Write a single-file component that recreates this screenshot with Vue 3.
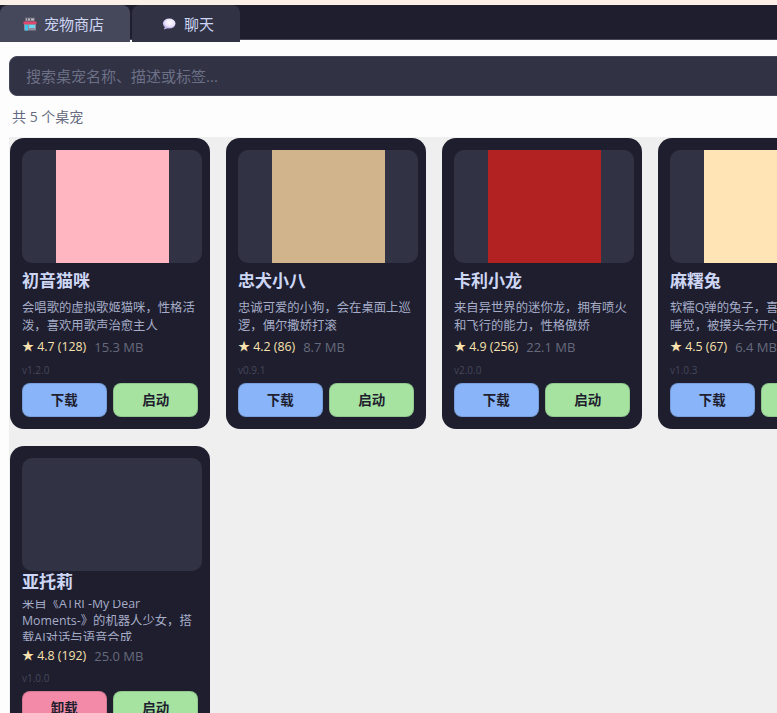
<template>
  <div class="app">
    <div class="strip"></div>
    <nav class="tabs">
      <button v-for="tab in tabs" :key="tab.id" class="tab" :class="{ active: tab.id === activeTab }">
        <svg v-if="tab.id === 'shop'" class="tab-icon" viewBox="0 0 14 14">
          <rect x="2" y="0.5" width="10" height="4" fill="#6f6b78" />
          <rect x="3" y="1.5" width="8" height="2" fill="#b9b6bf" />
          <rect x="4" y="1.5" width="1" height="2" fill="#5a5764" />
          <rect x="7" y="1.5" width="1" height="2" fill="#5a5764" />
          <rect x="0.5" y="4.5" width="13" height="2.5" fill="#e0486e" />
          <rect x="1" y="7" width="12" height="6.5" fill="#8f8c9c" />
          <rect x="2" y="8" width="3" height="5.5" fill="#3fc4ec" />
          <rect x="6" y="8" width="6" height="3" fill="#6fd6f2" />
        </svg>
        <svg v-else class="tab-icon wide" viewBox="0 0 15 14">
          <defs>
            <radialGradient id="bubble" cx="0.55" cy="0.4" r="0.65">
              <stop offset="0" stop-color="#ffffff" />
              <stop offset="0.6" stop-color="#e9e0fa" />
              <stop offset="1" stop-color="#a897e6" />
            </radialGradient>
          </defs>
          <ellipse cx="7.2" cy="6.6" rx="6.3" ry="5" fill="url(#bubble)" />
          <path d="M3 10l-1.2 2.6L6 11z" fill="#cfc3f2" />
        </svg>
        <span>{{ tab.label }}</span>
      </button>
    </nav>

    <main class="shop">
      <div class="search-wrap">
        <input class="search" type="text" placeholder="搜索桌宠名称、描述或标签..." />
      </div>
      <p class="count">共 {{ pets.length }} 个桌宠</p>

      <div class="grid">
        <article v-for="pet in pets" :key="pet.name" class="card" :class="{ tight: pet.installed }">
          <div class="thumb">
            <div v-if="pet.color" class="cover" :style="{ background: pet.color }"></div>
          </div>
          <h3 class="name">{{ pet.name }}</h3>
          <p class="desc"><span>{{ pet.desc }}</span></p>
          <div class="meta">
            <span class="rating"><i>★</i> {{ pet.rating }} ({{ pet.reviews }})</span>
            <span class="size">{{ pet.size }}</span>
          </div>
          <div class="version">{{ pet.version }}</div>
          <div class="actions">
            <button class="btn" :class="pet.installed ? 'remove' : 'download'">
              {{ pet.installed ? '卸载' : '下载' }}
            </button>
            <button class="btn launch">启动</button>
          </div>
        </article>
      </div>
    </main>
  </div>
</template>

<script setup>
const activeTab = 'shop'

const tabs = [
  { id: 'shop', label: '宠物商店' },
  { id: 'chat', label: '聊天' }
]

const pets = [
  { name: '初音猫咪', desc: '会唱歌的虚拟歌姬猫咪，性格活泼，喜欢用歌声治愈主人', rating: '4.7', reviews: 128, size: '15.3 MB', version: 'v1.2.0', color: '#ffb6c1' },
  { name: '忠犬小八', desc: '忠诚可爱的小狗，会在桌面上巡逻，偶尔撒娇打滚', rating: '4.2', reviews: 86, size: '8.7 MB', version: 'v0.9.1', color: '#d2b48c' },
  { name: '卡利小龙', desc: '来自异世界的迷你龙，拥有喷火和飞行的能力，性格傲娇', rating: '4.9', reviews: 256, size: '22.1 MB', version: 'v2.0.0', color: '#b22222' },
  { name: '麻糬兔', desc: '软糯Q弹的兔子，喜欢吃东西和睡觉，被摸头会开心地跳', rating: '4.5', reviews: 67, size: '6.4 MB', version: 'v1.0.3', color: '#ffe4b5' },
  { name: '亚托莉', desc: '来自《ATRI -My Dear Moments-》的机器人少女，搭载AI对话与语音合成', rating: '4.8', reviews: 192, size: '25.0 MB', version: 'v1.0.0', installed: true }
]
</script>

<style>
html,
body {
  margin: 0;
  overflow: hidden;
  background: #fdfdfd;
}
</style>

<style scoped>
.app {
  width: 877px;
  height: 713px;
  overflow: hidden;
  font-family: "Open Sans", "Noto Sans CJK SC", sans-serif;
}

.strip {
  height: 5px;
  background: #faf0e8;
}

.tabs {
  display: flex;
  gap: 2px;
  height: 34px;
  background: #1e1e2e;
  border-bottom: 1px solid #45475a;
}

.tab {
  display: flex;
  align-items: center;
  gap: 7px;
  height: 37px;
  padding: 0 26px 0 30px;
  border: none;
  border-radius: 8px 8px 0 0;
  background: #313244;
  color: #cdd6f4;
  font: inherit;
  font-size: 15px;
}

.tab.active {
  padding-left: 23px;
  background: #45475a;
}

.tab-icon {
  width: 14px;
  height: 14px;
  flex: none;
}

.tab-icon.wide {
  width: 15px;
}

.search-wrap {
  padding: 16px 0 0 9px;
}

.search {
  display: block;
  box-sizing: border-box;
  width: 868px;
  height: 40px;
  padding: 0 16px;
  border: 1px solid #45475a;
  border-radius: 8px;
  background: #313244;
  color: #cdd6f4;
  font: inherit;
  font-size: 15px;
  outline: none;
}

.search::placeholder {
  color: #6c7086;
  opacity: 1;
}

.count {
  margin: 0;
  padding: 0 12px;
  height: 41px;
  line-height: 42px;
  color: #666a80;
  font-size: 14px;
}

.grid {
  display: grid;
  grid-template-columns: repeat(4, 200px);
  gap: 16px;
  margin-left: 9px;
  padding: 0.7px 0 0 1px;
  background: #efefef;
  height: 600px;
}

.card {
  box-sizing: border-box;
  height: 291px;
  padding: 12px;
  border-radius: 14px;
  background: #1e1e2e;
}

.thumb {
  display: flex;
  justify-content: center;
  width: 180px;
  height: 113.3px;
  overflow: hidden;
  border-radius: 10px;
  background: #313244;
}

.cover {
  width: 113px;
  height: 100%;
}

.name {
  margin: 8px 0 0;
  height: 20px;
  line-height: 20px;
  color: #cdd6f4;
  font-size: 17px;
  font-weight: 700;
}

.desc {
  display: flex;
  align-items: center;
  margin: 8.5px 0 0;
  height: 34.6px;
  overflow: hidden;
  line-height: 17.3px;
  color: #a6adc8;
  font-size: 12.35px;
}

.meta {
  display: flex;
  align-items: center;
  gap: 8px;
  margin-top: 3.9px;
  height: 18px;
  line-height: 18px;
}

.rating {
  color: #f9e2af;
  font-size: 12.35px;
}

.rating i {
  font-style: normal;
  font-size: 12px;
  line-height: 1;
}

.size {
  color: #666a7c;
  font-size: 13px;
}

.version {
  margin-top: 7px;
  height: 14px;
  line-height: 14px;
  color: #45475a;
  font-size: 10px;
}

.actions {
  display: flex;
  gap: 6.7px;
  margin-top: 6px;
}

.btn {
  flex: 1;
  height: 34px;
  padding: 0 0 2px;
  border: 1px solid rgba(0, 0, 0, 0.12);
  border-radius: 8px;
  color: #1e1e2e;
  font: inherit;
  font-size: 13.5px;
  font-weight: 700;
}

.download {
  background: #89b4fa;
}

.launch {
  background: #a6e3a1;
}

.remove {
  background: #f38ba8;
}

/* last card: description runs to a third line and gets squeezed */
.tight .name {
  margin-top: 1px;
}

.tight .desc {
  margin-top: 8px;
  height: 41px;
}

.tight .meta {
  margin-top: 6px;
}

.tight .version {
  margin-top: 6px;
}
</style>
